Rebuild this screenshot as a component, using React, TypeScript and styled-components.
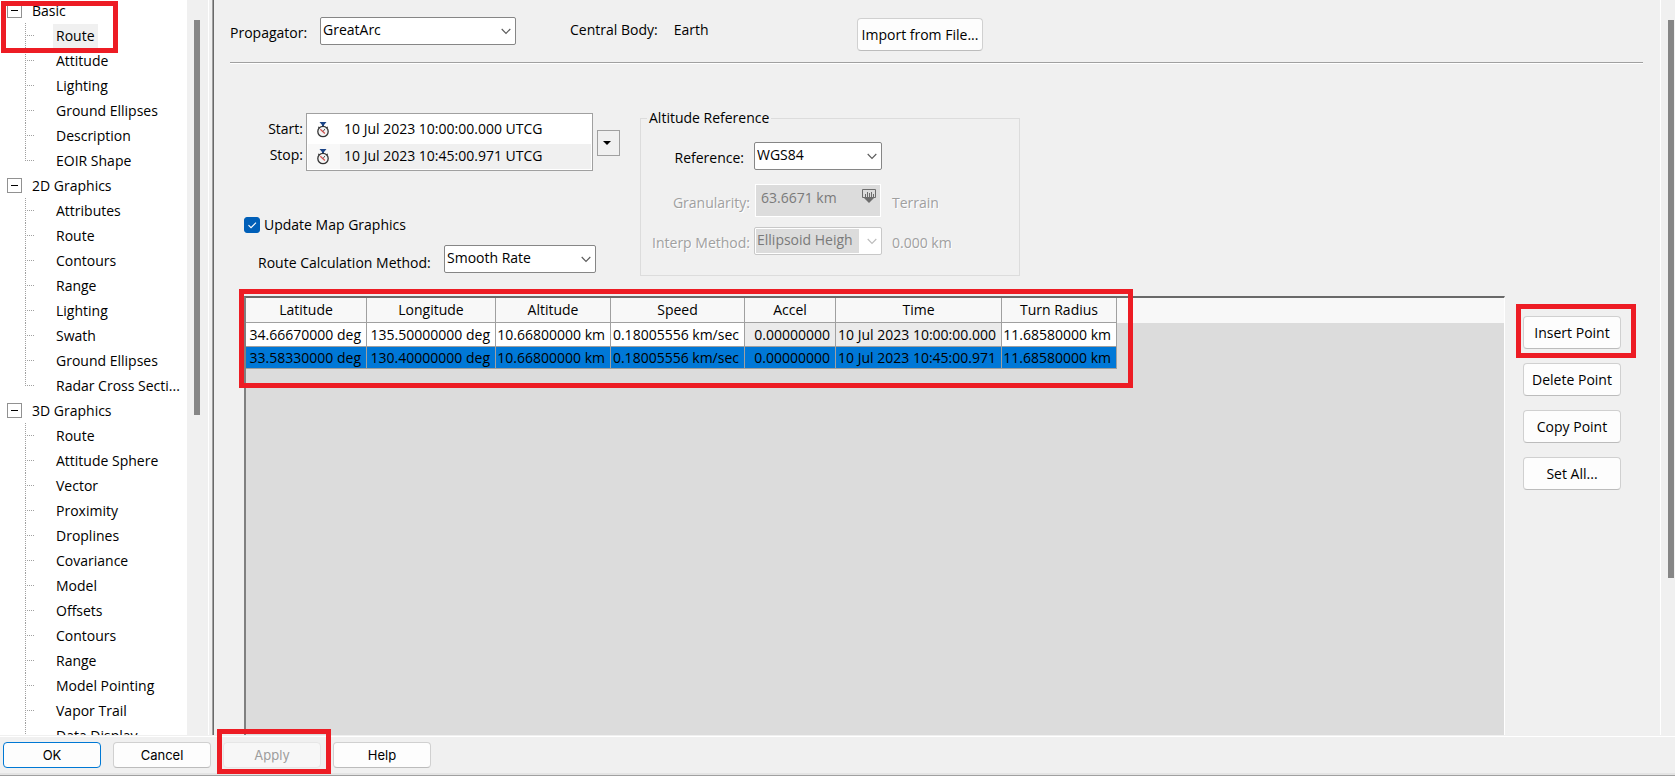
import React, { useState } from "react";
import styled, { createGlobalStyle, css } from "styled-components";

const face = "#f0f0f0";
const mark = "#ed1c24";

const Global = createGlobalStyle`
  *, *::before, *::after { box-sizing: border-box; }
  body { margin: 0; background: ${face}; color: #000; font: 14px/20px "Open Sans", "Noto Sans", sans-serif; }
  button, input, select { font: inherit; color: inherit; margin: 0; }
`;

const Window = styled.div`
  display: flex;
  flex-direction: column;
  height: 100vh;
  min-height: 480px;
  background: ${face};
`;

const Body = styled.div`
  display: flex;
  flex: 1;
  min-height: 0;
  border-bottom: 1px solid ${face};
`;

/* ---------- red call-out frames ---------- */

const Marker = styled.div`
  position: absolute;
  border: 5px solid ${mark};
  pointer-events: none;
  z-index: 2;
`;
const RouteMark = styled(Marker)`left: 1px; top: 1px; width: 117px; height: 52px;`;
const GridMark = styled(Marker)`left: -7px; top: -9px; width: 894px; height: 99px;`;
const InsertMark = styled(Marker)`left: 11px; top: 9px; width: 120px; height: 54px;`;
const ApplyMark = styled(Marker)`left: 217px; top: -8px; width: 114px; height: 45px;`;

/* ---------- navigation tree ---------- */

const Sidebar = styled.nav`
  position: relative;
  display: flex;
  flex: 0 0 214px;
  border-right: 1px solid #696969;
  box-shadow: inset -1px 0 #a0a0a0;
`;

const TreePane = styled.div`
  flex: 1;
  overflow: hidden;
  background: #fff;
`;

const Tree = styled.ul`
  list-style: none;
  margin: -2px 0 0;
  padding: 0;
`;

const GroupRow = styled.div`
  display: flex;
  align-items: center;
  height: 25px;
  gap: 10px;
  padding-left: 7px;
`;

const Toggle = styled.button`
  display: grid;
  place-items: center;
  width: 15px;
  height: 15px;
  padding: 0;
  border: 1px solid #919191;
  background: #fff;
  &::before { content: ""; width: 7px; height: 1px; background: #000; }
`;

const Branch = styled.ul`
  list-style: none;
  margin: 0;
  padding: 0 0 0 25px;
`;

const Leaf = styled.li`
  display: flex;
  align-items: center;
  height: 25px;
  background:
    repeating-linear-gradient(90deg, #a0a0a0 0 1px, transparent 1px 2px) 0 12px / 10px 1px no-repeat,
    repeating-linear-gradient(#a0a0a0 0 1px, transparent 1px 2px) 0 0 / 1px 100% no-repeat;
  &:last-child {
    background:
      repeating-linear-gradient(90deg, #a0a0a0 0 1px, transparent 1px 2px) 0 12px / 10px 1px no-repeat,
      repeating-linear-gradient(#a0a0a0 0 1px, transparent 1px 2px) 0 0 / 1px 12px no-repeat;
  }
`;

const NodeLabel = styled.button<{ $active?: boolean }>`
  height: 24px;
  margin-left: 28px;
  padding: 0 3px;
  border: 0;
  white-space: nowrap;
  background: ${(p) => (p.$active ? face : "transparent")};
`;

const ScrollTrack = styled.div<{ $width: number; $side: number }>`
  flex: 0 0 ${(p) => p.$width}px;
  padding: 20px ${(p) => p.$side}px 0 7px;
`;

const ScrollThumb = styled.div<{ $share: string }>`
  height: ${(p) => p.$share};
  background: #868686;
`;

const SideEdge = styled.div`
  flex: 0 0 5px;
  border-left: 1px solid #fff;
`;

/* ---------- shared controls ---------- */

const Push = styled.button<{ $tall?: boolean }>`
  height: ${(p) => (p.$tall ? 33 : 26)}px;
  padding: 0 9px;
  border: 1px solid #d0d0d0;
  border-bottom-color: #bcbcbc;
  border-radius: 4px;
  background: #fdfdfd;
  white-space: nowrap;
`;

const SelectBox = styled.span<{ $width: number; $off?: boolean }>`
  position: relative;
  display: inline-flex;
  width: ${(p) => p.$width}px;
  height: 28px;
  color: ${(p) => (p.$off ? "#bcbcbc" : "#5a5a5a")};
  svg { position: absolute; right: 5px; top: 11px; pointer-events: none; }
  select {
    appearance: none;
    width: 100%;
    padding: 0 24px 2px 2px;
    border: 1px solid #868686;
    border-radius: 2px;
    background: #fff;
    color: #000;
    opacity: 1;
    ${(p) => p.$off && css`
      border-color: #c8c8c8;
      color: #7a7a7a;
      padding-right: 22px;
      background: linear-gradient(#dcdcdc, #dcdcdc) 1px 1px / calc(100% - 23px) calc(100% - 2px) no-repeat #fff;
    `}
  }
`;

function Select({ id, value, width, off }: { id: string; value: string; width: number; off?: boolean }) {
  return (
    <SelectBox $width={width} $off={off}>
      <select id={id} disabled={off}>
        <option>{value}</option>
      </select>
      <svg width="10" height="7" viewBox="0 0 10 7" fill="none" stroke="currentColor" strokeWidth="1.1">
        <path d="M.7 1 5 5.4 9.3 1" />
      </svg>
    </SelectBox>
  );
}

/* ---------- main form ---------- */

const Main = styled.main`
  display: flex;
  flex: 1;
  flex-direction: column;
  min-width: 0;
  padding: 17px 0 0 16px;
  border-right: 1px solid #fff;
`;

const TopRow = styled.div`
  display: flex;
  align-items: flex-start;
  height: 46px;
  margin-right: 17px;
  border-bottom: 1px solid #a0a0a0;
  box-shadow: 0 1px #fff;
  & > label { width: 90px; padding-top: 6px; }
`;

const BodyInfo = styled.dl`
  display: flex;
  gap: 16px;
  width: 287px;
  margin: 3px 0 0 54px;
  dd { margin: 0; }
`;

const ImportButton = styled(Push)`
  width: 126px;
  margin-top: 1px;
  padding: 0;
`;

const Settings = styled.div`
  display: flex;
  gap: 20px;
  height: 232px;
  padding-top: 45px;
`;

const LeftColumn = styled.div`
  width: 390px;
  padding: 5px 0 0 14px;
`;

const TimeRow = styled.div`
  display: flex;
  align-items: center;
`;

const TimeLabels = styled.div`
  display: flex;
  flex-direction: column;
  gap: 6px;
  width: 59px;
  text-align: right;
`;

const TimeList = styled.div`
  width: 287px;
  height: 58px;
  margin-left: 3px;
  padding: 1px;
  border: 1px solid #a0a0a0;
  background: #fff;
`;

const TimeEntry = styled.div<{ $shade?: boolean }>`
  display: flex;
  align-items: center;
  height: ${(p) => (p.$shade ? 25 : 29)}px;
  background: ${(p) => (p.$shade ? "#f8f8f8" : "#fff")};
  svg { flex: 0 0 32px; }
  input {
    flex: 1;
    min-width: 0;
    height: 100%;
    padding: 0 4px 2px;
    border: 0;
    background: ${(p) => (p.$shade ? face : "#fff")};
  }
`;

const DropButton = styled.button`
  display: grid;
  place-items: center;
  width: 23px;
  height: 26px;
  margin: 2px 0 0 4px;
  padding: 0 3px 0 0;
  border: 1px solid #a0a0a0;
  background: ${face};
`;

const CheckLabel = styled.label`
  display: flex;
  align-items: center;
  gap: 4px;
  margin-top: 44px;
  input {
    appearance: none;
    width: 16px;
    height: 16px;
    border-radius: 3px;
    background: #fff;
    border: 1px solid #868686;
  }
  input:checked {
    border-color: #005fb8;
    background: #005fb8 url("data:image/svg+xml,%3Csvg xmlns='http://www.w3.org/2000/svg' viewBox='0 0 14 14' fill='none' stroke='white' stroke-width='1.1'%3E%3Cpath d='M3.5 7.2 6 9.7l5-5'/%3E%3C/svg%3E");
  }
`;

const MethodRow = styled.div`
  display: flex;
  align-items: center;
  justify-content: space-between;
  width: 352px;
  margin-top: 10px;
  padding-left: 14px;
  label { padding-top: 8px; }
`;

const AltitudeGroup = styled.fieldset`
  width: 380px;
  height: 168px;
  margin: 0;
  padding: 0 0 0 6px;
  border: 1px solid #dcdcdc;
  legend { padding: 0 2px; }
`;

const AltitudeGrid = styled.div`
  display: grid;
  grid-template-columns: 107px 128px 1fr;
  grid-template-rows: 28px 33px 28px;
  row-gap: 12px;
  align-items: center;
  padding-top: 14px;
`;

const FieldLabel = styled.label<{ $off?: boolean; $gap?: number }>`
  padding: 4px ${(p) => p.$gap ?? 4}px 0 0;
  text-align: right;
  white-space: nowrap;
  ${(p) => p.$off && css`color: #a0a0a0; text-shadow: 1px 1px #fff;`}
`;

const SideNote = styled.span`
  padding: 4px 0 0 10px;
  color: #a0a0a0;
  text-shadow: 1px 1px #fff;
`;

const UnitField = styled.span`
  position: relative;
  display: flex;
  height: 33px;
  margin: 0 1px;
  input {
    width: 100%;
    padding: 0 36px 6px 5px;
    border: 1px solid #fff;
    background: #dcdcdc;
    color: #7a7a7a;
  }
  svg { position: absolute; right: 5px; top: 5px; }
`;

const UnitRow = styled.div`
  display: grid;
  grid-column: 1 / -1;
  grid-template-columns: subgrid;
  align-items: center;
  padding-top: 4px;
`;

/* ---------- waypoint grid ---------- */

const Work = styled.div`
  display: flex;
  flex: 1;
  min-height: 0;
  padding-left: 14px;
`;

const Sheet = styled.div`
  position: relative;
  flex: 1;
  min-width: 0;
  margin-top: 1px;
  border: solid;
  border-width: 2px 1px 0 2px;
  border-color: #696969 #fff #fff #808080;
  background: linear-gradient(#f8f8f8, #f8f8f8) 0 0 / 100% 25px no-repeat #dcdcdc;
`;

const Grid = styled.table`
  width: 871px;
  table-layout: fixed;
  border-collapse: separate;
  border-spacing: 0;
  line-height: 20px;
  th, td {
    padding: 0;
    border: solid #a0a0a0;
    border-width: 0 1px 1px 0;
    font-weight: 400;
    white-space: nowrap;
  }
  th { height: 25px; }
  td { height: 24px; }
`;

const Cell = styled.td<{ $locked?: boolean }>`
  && { padding-right: 5px; }
  text-align: right;
  background: ${(p) => (p.$locked ? "#ebebeb" : "#fff")};
`;

const Row = styled.tr<{ $selected: boolean }>`
  ${(p) => p.$selected && css`
    ${Cell} { height: 22px; background: #0078d7; }
  `}
`;

const Actions = styled.div`
  position: relative;
  display: flex;
  flex: 0 0 155px;
  flex-direction: column;
  gap: 14px;
  padding: 21px 39px 0 18px;
  button { padding: 0; }
`;

/* ---------- footer ---------- */

const Footer = styled.footer`
  position: relative;
  display: flex;
  gap: 12px;
  height: 40px;
  padding: 5px 3px;
  border-top: 1px solid #fff;
  border-bottom: 1px solid #a0a0a0;
  box-shadow: inset 0 -2px #e4e4e4;
  font-family: Inter, sans-serif;
  font-size: 13px;
`;

const FooterButton = styled(Push)<{ $primary?: boolean }>`
  width: 98px;
  ${(p) => p.$primary && css`border-color: #0078d4;`}
  &:disabled { color: #9d9d9d; background: #f7f7f7; border-color: #e6e6e6; }
`;

const tree = [
  { name: "Basic", items: ["Route", "Attitude", "Lighting", "Ground Ellipses", "Description", "EOIR Shape"] },
  { name: "2D Graphics", items: ["Attributes", "Route", "Contours", "Range", "Lighting", "Swath", "Ground Ellipses", "Radar Cross Secti..."] },
  { name: "3D Graphics", items: ["Route", "Attitude Sphere", "Vector", "Proximity", "Droplines", "Covariance", "Model", "Offsets", "Contours", "Range", "Model Pointing", "Vapor Trail", "Data Display"] },
];

const columns: [string, number][] = [
  ["Latitude", 121], ["Longitude", 129], ["Altitude", 115], ["Speed", 134],
  ["Accel", 91], ["Time", 166], ["Turn Radius", 115],
];

const points = [
  ["34.66670000 deg", "135.50000000 deg", "10.66800000 km", "0.18005556 km/sec", "0.00000000", "10 Jul 2023 10:00:00.000", "11.68580000 km"],
  ["33.58330000 deg", "130.40000000 deg", "10.66800000 km", "0.18005556 km/sec", "0.00000000", "10 Jul 2023 10:45:00.971", "11.68580000 km"],
];

const Stopwatch = () => (
  <svg width="32" height="16" viewBox="0 0 32 16" fill="none">
    <path d="M11.5 0h7L16 3v1h-2V3z" fill="#1c4587" />
    <circle cx="15" cy="9.5" r="5.2" fill="#f4f4f4" stroke="#333" strokeWidth="1.3" />
    <path d="m10 4.8 1.4 1.2M20 4.8l-1.4 1.2" stroke="#333" />
    <path d="m12.3 7.2 4.6 4.2" stroke="#d9534f" strokeWidth="1.3" />
    <path d="m15 9.5 2-2.6" stroke="#555" />
  </svg>
);

const UnitIcon = () => (
  <svg width="14" height="15" viewBox="0 0 14 15">
    <path d="M.5.5h13v8H.5z" fill="none" stroke="#6d6d6d" />
    <path d="M3.5 8V5M5.5 8V3M7.5 8V4M9.5 8V3M11.5 8V5" stroke="#6d6d6d" />
    <path d="M2 9h10l-5 5z" fill="#6d6d6d" />
  </svg>
);

export default function App() {
  const [selected, setSelected] = useState(1);
  return (
    <>
      <Global />
      <Window>
        <Body>
          <Sidebar>
            <TreePane>
              <Tree>
                {tree.map((group, g) => (
                  <li key={group.name}>
                    <GroupRow>
                      <Toggle aria-label={`Collapse ${group.name}`} />
                      <span>{group.name}</span>
                    </GroupRow>
                    <Branch>
                      {group.items.map((item, i) => (
                        <Leaf key={i}>
                          <NodeLabel $active={g === 0 && i === 0}>{item}</NodeLabel>
                        </Leaf>
                      ))}
                    </Branch>
                  </li>
                ))}
              </Tree>
            </TreePane>
            <ScrollTrack $width={21} $side={8}><ScrollThumb $share="55.3%" /></ScrollTrack>
            <SideEdge />
            <RouteMark />
          </Sidebar>

          <Main>
            <TopRow>
              <label htmlFor="propagator">Propagator:</label>
              <Select id="propagator" value="GreatArc" width={196} />
              <BodyInfo>
                <dt>Central Body:</dt>
                <dd>Earth</dd>
              </BodyInfo>
              <ImportButton $tall>Import from File...</ImportButton>
            </TopRow>

            <Settings>
              <LeftColumn>
                <TimeRow>
                  <TimeLabels>
                    <label htmlFor="start">Start:</label>
                    <label htmlFor="stop">Stop:</label>
                  </TimeLabels>
                  <TimeList>
                    <TimeEntry>
                      <Stopwatch />
                      <input id="start" defaultValue="10 Jul 2023 10:00:00.000 UTCG" />
                    </TimeEntry>
                    <TimeEntry $shade>
                      <Stopwatch />
                      <input id="stop" defaultValue="10 Jul 2023 10:45:00.971 UTCG" />
                    </TimeEntry>
                  </TimeList>
                  <DropButton aria-label="Time options">
                    <svg width="8" height="4" viewBox="0 0 8 4"><path d="M0 0h8L4 4z" /></svg>
                  </DropButton>
                </TimeRow>
                <CheckLabel>
                  <input type="checkbox" defaultChecked />
                  Update Map Graphics
                </CheckLabel>
                <MethodRow>
                  <label htmlFor="method">Route Calculation Method:</label>
                  <Select id="method" value="Smooth Rate" width={152} />
                </MethodRow>
              </LeftColumn>

              <AltitudeGroup>
                <legend>Altitude Reference</legend>
                <AltitudeGrid>
                  <FieldLabel htmlFor="reference" $gap={10}>Reference:</FieldLabel>
                  <Select id="reference" value="WGS84" width={128} />
                  <span />
                  <UnitRow>
                    <FieldLabel htmlFor="granularity" $off>Granularity:</FieldLabel>
                    <UnitField>
                      <input id="granularity" defaultValue="63.6671 km" disabled />
                      <UnitIcon />
                    </UnitField>
                    <SideNote>Terrain</SideNote>
                  </UnitRow>
                  <FieldLabel htmlFor="interp" $off>Interp Method:</FieldLabel>
                  <Select id="interp" value="Ellipsoid Heigh" width={128} off />
                  <SideNote>0.000 km</SideNote>
                </AltitudeGrid>
              </AltitudeGroup>
            </Settings>

            <Work>
              <Sheet>
                <Grid>
                  <colgroup>
                    {columns.map(([name, width]) => <col key={name} width={width} />)}
                  </colgroup>
                  <thead>
                    <tr>{columns.map(([name]) => <th key={name} scope="col">{name}</th>)}</tr>
                  </thead>
                  <tbody>
                    {points.map((point, r) => (
                      <Row key={r} $selected={r === selected} onClick={() => setSelected(r)}>
                        {point.map((value, c) => (
                          <Cell key={c} $locked={c === 4 || c === 5}>{value}</Cell>
                        ))}
                      </Row>
                    ))}
                  </tbody>
                </Grid>
                <GridMark />
              </Sheet>
              <Actions>
                <Push $tall>Insert Point</Push>
                <Push $tall>Delete Point</Push>
                <Push $tall>Copy Point</Push>
                <Push $tall>Set All...</Push>
                <InsertMark />
              </Actions>
            </Work>
          </Main>
          <ScrollTrack $width={14} $side={1}><ScrollThumb $share="78%" /></ScrollTrack>
        </Body>

        <Footer>
          <FooterButton $primary>OK</FooterButton>
          <FooterButton>Cancel</FooterButton>
          <FooterButton disabled>Apply</FooterButton>
          <FooterButton>Help</FooterButton>
          <ApplyMark />
        </Footer>
      </Window>
    </>
  );
}
